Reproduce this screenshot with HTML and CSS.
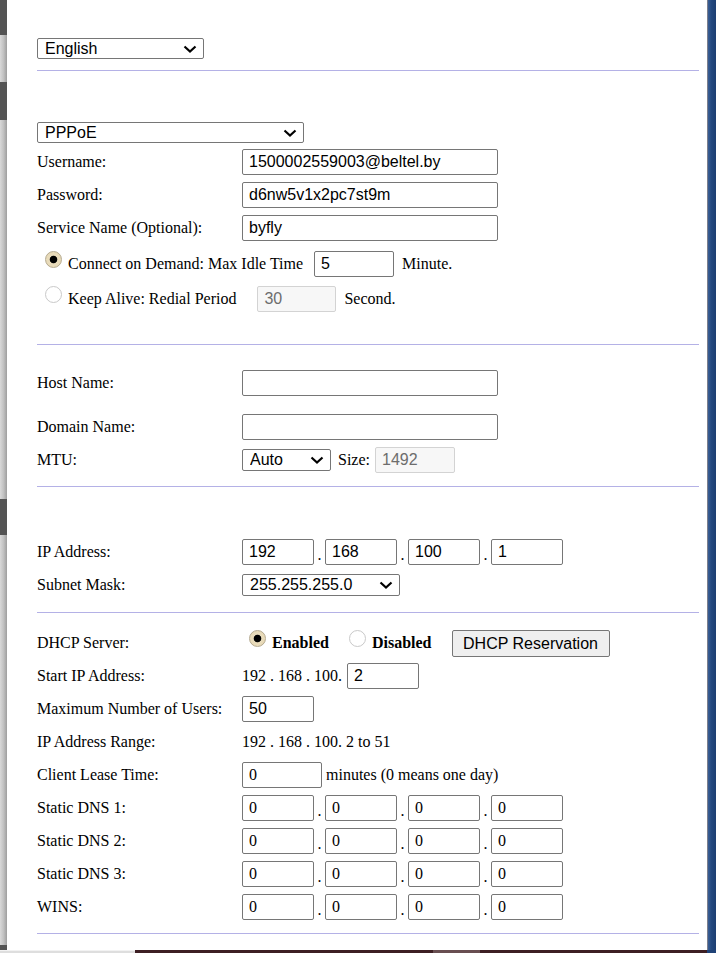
FILE: index.html
```html
<!DOCTYPE html>
<html>
<head>
<meta charset="utf-8">
<link rel="stylesheet" href="styles.css">
</head>
<body>
<div class="frame">
  <div class="lstrip">
    <div class="seg dark h35"></div>
    <div class="seg light h47"></div>
    <div class="seg dark h38"></div>
    <div class="seg light h379"></div>
    <div class="seg dark h36"></div>
    <div class="seg light h410"></div>
    <div class="seg dark h5"></div>
  </div>
  <div class="main">
    <div class="lang">
      <div class="sel w167"><select><option>English</option></select><svg class="chev" width="14" height="8" viewBox="0 0 14 8"><path d="M1.5 1.5l5.5 5 5.5-5" fill="none" stroke="#000" stroke-width="2.2"/></svg></div>
    </div>
    <div class="rule"></div>

    <div class="sec-wan">
      <div class="sel w267"><select><option>PPPoE</option></select><svg class="chev" width="14" height="8" viewBox="0 0 14 8"><path d="M1.5 1.5l5.5 5 5.5-5" fill="none" stroke="#000" stroke-width="2.2"/></svg></div>
      <div class="row first">
        <span class="lbl">Username:</span>
        <input class="txt w256" type="text" value="1500002559003@beltel.by">
      </div>
      <div class="row">
        <span class="lbl">Password:</span>
        <input class="txt w256" type="text" value="d6nw5v1x2pc7st9m">
      </div>
      <div class="row">
        <span class="lbl">Service Name (Optional):</span>
        <input class="txt w256" type="text" value="byfly">
      </div>
      <div class="row radio-row connect">
        <span class="radio on"></span>
        <span class="rtext">Connect on Demand: Max Idle Time</span>
        <input class="txt w80 ml11" type="text" value="5">
        <span class="unit">Minute.</span>
      </div>
      <div class="row radio-row keep">
        <span class="radio"></span>
        <span class="rtext">Keep Alive: Redial Period</span>
        <input class="txt w79 ml21 dis" type="text" value="30" disabled>
        <span class="unit">Second.</span>
      </div>
    </div>
    <div class="rule r29"></div>

    <div class="sec-opt">
      <div class="row">
        <span class="lbl">Host Name:</span>
        <input class="txt w256" type="text" value="">
      </div>
      <div class="row gap11">
        <span class="lbl">Domain Name:</span>
        <input class="txt w256" type="text" value="">
      </div>
      <div class="row">
        <span class="lbl">MTU:</span>
        <div class="sel w89 h22"><select><option>Auto</option></select><svg class="chev" width="14" height="8" viewBox="0 0 14 8"><path d="M1.5 1.5l5.5 5 5.5-5" fill="none" stroke="#000" stroke-width="2.2"/></svg></div>
        <span class="size">Size:</span>
        <input class="txt w80 dis" type="text" value="1492" disabled>
      </div>
    </div>
    <div class="rule r10"></div>

    <div class="sec-lan">
      <div class="row">
        <span class="lbl">IP Address:</span>
        <div class="ip">
          <input class="txt oct" type="text" value="192"><span class="dot">.</span>
          <input class="txt oct" type="text" value="168"><span class="dot">.</span>
          <input class="txt oct" type="text" value="100"><span class="dot">.</span>
          <input class="txt oct" type="text" value="1">
        </div>
      </div>
      <div class="row">
        <span class="lbl">Subnet Mask:</span>
        <div class="sel w158 h22"><select><option>255.255.255.0</option></select><svg class="chev" width="14" height="8" viewBox="0 0 14 8"><path d="M1.5 1.5l5.5 5 5.5-5" fill="none" stroke="#000" stroke-width="2.2"/></svg></div>
      </div>
    </div>
    <div class="rule r11"></div>

    <div class="sec-dhcp">
      <div class="row">
        <span class="lbl">DHCP Server:</span>
        <span class="radio on ml7"></span>
        <b class="rtext">Enabled</b>
        <span class="radio ml20"></span>
        <b class="rtext">Disabled</b>
        <button class="btn" type="button">DHCP Reservation</button>
      </div>
      <div class="row">
        <span class="lbl">Start IP Address:</span>
        <span class="plain">192 . 168 . 100.</span>
        <input class="txt oct ml5" type="text" value="2">
      </div>
      <div class="row">
        <span class="lbl">Maximum Number of Users:</span>
        <input class="txt oct" type="text" value="50">
      </div>
      <div class="row">
        <span class="lbl">IP Address Range:</span>
        <span class="plain">192 . 168 . 100. 2 to 51</span>
      </div>
      <div class="row">
        <span class="lbl">Client Lease Time:</span>
        <input class="txt w80 serif" type="text" value="0">
        <span class="plain ml4">minutes (0 means one day)</span>
      </div>
      <div class="row">
        <span class="lbl">Static DNS 1:</span>
        <div class="ip">
          <input class="txt oct serif" type="text" value="0"><span class="dot">.</span>
          <input class="txt oct serif" type="text" value="0"><span class="dot">.</span>
          <input class="txt oct serif" type="text" value="0"><span class="dot">.</span>
          <input class="txt oct serif" type="text" value="0">
        </div>
      </div>
      <div class="row">
        <span class="lbl">Static DNS 2:</span>
        <div class="ip">
          <input class="txt oct serif" type="text" value="0"><span class="dot">.</span>
          <input class="txt oct serif" type="text" value="0"><span class="dot">.</span>
          <input class="txt oct serif" type="text" value="0"><span class="dot">.</span>
          <input class="txt oct serif" type="text" value="0">
        </div>
      </div>
      <div class="row">
        <span class="lbl">Static DNS 3:</span>
        <div class="ip">
          <input class="txt oct serif" type="text" value="0"><span class="dot">.</span>
          <input class="txt oct serif" type="text" value="0"><span class="dot">.</span>
          <input class="txt oct serif" type="text" value="0"><span class="dot">.</span>
          <input class="txt oct serif" type="text" value="0">
        </div>
      </div>
      <div class="row">
        <span class="lbl">WINS:</span>
        <div class="ip">
          <input class="txt oct serif" type="text" value="0"><span class="dot">.</span>
          <input class="txt oct serif" type="text" value="0"><span class="dot">.</span>
          <input class="txt oct serif" type="text" value="0"><span class="dot">.</span>
          <input class="txt oct serif" type="text" value="0">
        </div>
      </div>
    </div>
    <div class="rule r10"></div>
  </div>
  <div class="rstrip"></div>
</div>
<div class="bstrip">
  <div class="b1"></div>
  <div class="b2"></div>
  <div class="b3"></div>
  <div class="b4"></div>
  <div class="b5"></div>
</div>
</body>
</html>
```

FILE: styles.css
```css
* { box-sizing: border-box; }
html, body {
  margin: 0;
  padding: 0;
  background: #fff;
  overflow: hidden;
}
body {
  width: 716px;
  height: 953px;
  font-family: "Liberation Serif", "Times New Roman", serif;
  font-size: 16px;
  color: #000;
}
.frame {
  display: flex;
  height: 950px;
  overflow: hidden;
}
.lstrip {
  width: 7px;
  flex: none;
  display: flex;
  flex-direction: column;
}
.seg { width: 7px; flex: none; }
.seg.dark { background: #545454; }
.seg.light { background: linear-gradient(to right, #d9d9d9, #c2c2c2 50%, #9e9e9e); }
.h35 { height: 35px; }
.h47 { height: 47px; }
.h38 { height: 38px; }
.h379 { height: 379px; }
.h36 { height: 36px; }
.h410 { height: 410px; }
.h5 { height: 5px; }

.rstrip {
  width: 9px;
  flex: none;
  border-left: 1px solid #7c7f8c;
  background: linear-gradient(to right, #3a5f95, #24497f 40%, #1c3e72);
}
.main {
  width: 700px;
  flex: none;
  padding: 0 8px 0 30px;
  background: #fff;
}
.rule {
  height: 1px;
  background: #b4b1e6;
}
.lang { padding-top: 38px; height: 70px; }
.r29 { margin-top: 29px; }
.r10 { margin-top: 10px; }
.r11 { margin-top: 11px; }

.sec-wan { padding-top: 51px; }
.sec-opt { padding-top: 21px; }
.sec-lan { padding-top: 48px; }
.sec-dhcp { padding-top: 13px; }

.row {
  display: flex;
  align-items: center;
  height: 33px;
  white-space: nowrap;
}
.row.first { margin-top: 2px; }
.row.gap11 { margin-top: 11px; }
.row.connect { margin-top: 3px; }
.row.keep { margin-top: 2px; }
.lbl {
  width: 205px;
  flex: none;
}
.radio-row { padding-left: 8px; }

.sel {
  position: relative;
  display: inline-block;
  height: 21px;
  flex: none;
}
.sel.h22 { height: 22px; }
.sel select {
  -webkit-appearance: none;
  appearance: none;
  display: block;
  width: 100%;
  height: 100%;
  margin: 0;
  padding: 0 0 0 7px;
  border: 1px solid #767676;
  border-radius: 2px;
  background: #fff;
  color: #000;
  font-family: "Liberation Sans", Arial, sans-serif;
  font-size: 16px;
  line-height: 19px;
}
.sel .chev {
  position: absolute;
  right: 7px;
  top: 50%;
  margin-top: -4px;
  pointer-events: none;
}
.w167 { width: 167px; }
.w267 { width: 267px; }
.w89 { width: 89px; }
.w158 { width: 158px; }

.txt {
  height: 26px;
  margin: 0;
  padding: 0 6px;
  border: 1px solid #767676;
  border-radius: 2px;
  background: #fff;
  color: #000;
  font-family: "Liberation Sans", Arial, sans-serif;
  font-size: 16px;
  flex: none;
}
.txt.serif { font-family: "Liberation Serif", "Times New Roman", serif; }
.txt.dis {
  background: #f7f7f7;
  border-color: #d3d3d3;
  color: #6d6d6d;
}
.w256 { width: 256px; }
.w80 { width: 80px; }
.w79 { width: 79px; }
.oct { width: 72px; }
.ml11 { margin-left: 11px; }
.ml21 { margin-left: 21px; }
.ml7 { margin-left: 7px; }
.ml20 { margin-left: 20px; }
.ml5 { margin-left: 5px; }
.ml4 { margin-left: 4px; }

.unit { margin-left: 8px; }
.size { margin-left: 7px; margin-right: 5px; }

.ip { display: flex; align-items: center; }
.dot {
  width: 11px;
  text-align: center;
  font-family: "Liberation Serif", "Times New Roman", serif;
  padding-top: 6px;
}

.radio {
  width: 17px;
  height: 17px;
  flex: none;
  border-radius: 50%;
  border: 1px solid #c9c9c9;
  background: #fff;
  margin-right: 6px;
  position: relative;
  top: -4px;
}
.radio.on {
  border-color: #b5aa90;
  background: radial-gradient(circle, #000 0 3.4px, #e9dcbc 4.2px, #e6d7b2 100%);
}
.rtext { font-weight: normal; }
b.rtext { font-weight: bold; }

.btn {
  margin-left: 20px;
  height: 27px;
  width: 158px;
  padding: 0;
  border: 1px solid #767676;
  border-radius: 2px;
  background: #efefef;
  color: #000;
  font-family: "Liberation Sans", Arial, sans-serif;
  font-size: 16px;
  position: relative;
  top: 1px;
}
.plain { flex: none; }

.bstrip {
  display: flex;
  height: 3px;
}
.b1 { width: 135px; background: #dedede; border-top: 1px solid #f2f2f2; }
.b2 { width: 298px; background: #3d1f23; }
.b3 { width: 47px; background: #684e51; }
.b4 { width: 227px; background: #3d1f23; }
.b5 { width: 9px; background: #1f4277; }
```
